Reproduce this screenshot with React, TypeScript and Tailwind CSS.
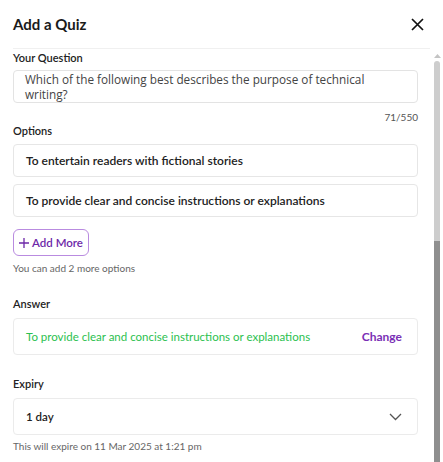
import React from "react";

const lato = { fontFamily: "Lato, 'Noto Sans', sans-serif" };

const Label = ({ children, className = "" }: { children: React.ReactNode; className?: string }) => (
  <p className={`text-[11px] font-semibold text-[#222] leading-[15px] ${className}`}>{children}</p>
);

const App = () => {
  return (
    <div className="w-[443px] h-[462px] bg-white overflow-hidden" style={lato}>
      {/* Header */}
      <div className="flex items-center justify-between pl-[13px] pr-[19px] h-[48px]">
        <h1 className="text-[15px] font-bold text-[#1a1a1a]">Add a Quiz</h1>
        <svg width="13" height="13" viewBox="0 0 13 13" fill="none" stroke="#111" strokeWidth="1.7">
          <path d="M1 1l11 11M12 1L1 12" />
        </svg>
      </div>

      <div className="flex">
        <div className="w-[431px]">
          <div className="ml-[13px] mr-[1px] border-t border-[#f0f0f0]" />

          <div className="pl-[13px] pr-[13px]">
            {/* Question */}
            <Label className="mt-[1px]">Your Question</Label>
            <div className="mt-[5px] w-[405px] h-[33px] border border-[#e3e3e3] rounded-[4px] pl-[11px] pt-[1px]">
              <p
                className="text-[11.75px] leading-[15px] text-[#444]"
                style={{ fontFamily: "'Open Sans', sans-serif" }}
              >
                Which of the following best describes the purpose of technical
                <br />
                writing?
              </p>
            </div>
            <p className="w-[405px] text-right text-[10px] text-[#555] mt-[8px] leading-[12px]">71/550</p>

            {/* Options */}
            <Label>Options</Label>
            <div className="flex flex-col gap-[7px] mt-[6px] w-[405px]">
              {[
                "To entertain readers with fictional stories",
                "To provide clear and concise instructions or explanations",
              ].map((o) => (
                <div
                  key={o}
                  className="h-[33px] border border-[#e6e6e6] rounded-[4px] flex items-center pl-[12px] text-[12px] font-semibold text-[#222]"
                >
                  {o}
                </div>
              ))}
            </div>

            <button className="mt-[12px] h-[27px] w-[76px] border border-[#b98be0] rounded-[6px] flex items-center justify-center gap-[3px] text-[11.5px] font-semibold text-[#6d28a8]">
              <svg width="10" height="10" viewBox="0 0 10 10" stroke="#6d28a8" strokeWidth="1.3">
                <path d="M5 0v10M0 5h10" />
              </svg>
              Add More
            </button>
            <p className="mt-[5px] text-[10px] text-[#666] leading-[14px]">You can add 2 more options</p>

            {/* Answer */}
            <Label className="mt-[21px]">Answer</Label>
            <div className="mt-[7px] w-[405px] h-[37px] border border-[#ebebeb] rounded-[4px] flex items-center justify-between pl-[12px] pr-[15px]">
              <span className="text-[11.5px] text-[#2bbf4f]">
                To provide clear and concise instructions or explanations
              </span>
              <span className="text-[12px] font-bold text-[#7a2fb5]">Change</span>
            </div>

            {/* Expiry */}
            <Label className="mt-[21px]">Expiry</Label>
            <div className="mt-[7px] w-[405px] h-[37px] border border-[#ebebeb] rounded-[4px] flex items-center justify-between pl-[12px] pr-[15px]">
              <span className="text-[11.5px] font-semibold text-[#222]">1 day</span>
              <svg width="13" height="8" viewBox="0 0 13 8" fill="none" stroke="#555" strokeWidth="1.3">
                <path d="M1 1l5.5 5.5L12 1" />
              </svg>
            </div>
            <p className="mt-[4px] text-[10px] text-[#666] leading-[14px]">
              This will expire on 11 Mar 2025 at 1:21 pm
            </p>
          </div>
        </div>

        {/* Scrollbar */}
        <div className="w-[12px] flex flex-col items-center pt-[6px]">
          <svg width="7" height="4" viewBox="0 0 7 4">
            <path d="M0 4L3.5 0L7 4Z" fill="#c4c4c4" />
          </svg>
          <div className="mt-[3px] w-[6px] h-[180px] bg-[#cdcdcd] rounded-t-[3px]" />
          <div className="w-[6px] h-[240px] bg-[#8f8f8f]" />
        </div>
      </div>
    </div>
  );
};

export default App;
